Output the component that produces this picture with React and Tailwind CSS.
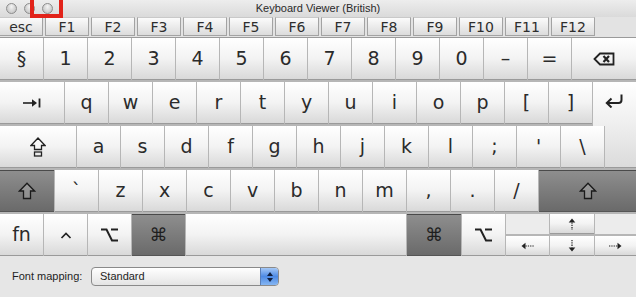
import React from "react";

const LIGHT =
  "flex items-center justify-center shrink-0 h-full bg-linear-to-b from-[#ffffff] via-[#f3f3f3] to-[#d9d9d9] border-b border-[#9a9a9a] text-[#2b2b2b]";
const DARK =
  "flex items-center justify-center shrink-0 h-full bg-linear-to-b from-[#8e8e8e] to-[#6a6a6a] border-t border-t-[#4a4a4a] border-b border-b-[#555555] text-[#1e1e1e]";
const FKEY =
  "flex items-center justify-center shrink-0 h-[19px] bg-linear-to-b from-[#fbfbfb] to-[#dcdcdc] border border-[#a3a3a3] border-t-[#c9c9c9] text-[14px] leading-none text-[#2e2e2e]";

function Key({ w, dark, children, extra = "" }) {
  return <div className={`${dark ? DARK : LIGHT} ${w} ${extra}`}>{children}</div>;
}

const S = "#222222";

function DeleteIcon() {
  return (
    <svg width="22" height="14" viewBox="0 0 22 14">
      <path d="M1.5 7 L7 1.5 H20.5 V12.5 H7 Z" fill="none" stroke={S} strokeWidth="1.8" />
      <path d="M10.5 4 L16 10 M16 4 L10.5 10" stroke={S} strokeWidth="2.2" />
    </svg>
  );
}
function TabIcon() {
  return (
    <svg width="18" height="10" viewBox="0 0 18 10">
      <path d="M0 5 H10" stroke={S} strokeWidth="1.6" />
      <path d="M9 1.2 L14 5 L9 8.8 Z" fill={S} />
      <path d="M16.5 0.5 V9.5" stroke={S} strokeWidth="1.8" />
    </svg>
  );
}
function ReturnIcon() {
  return (
    <svg width="19" height="14" viewBox="0 0 19 14">
      <path d="M16.5 0.5 V6 Q16.5 9 13.5 9 H3" fill="none" stroke={S} strokeWidth="2" />
      <path d="M6.5 4.5 L1.8 9 L6.5 13.5" fill="none" stroke={S} strokeWidth="2" />
    </svg>
  );
}
function CapsIcon() {
  return (
    <svg width="16" height="20" viewBox="0 0 16 20">
      <path d="M8 1 L15 8.5 H11.5 V12.5 H4.5 V8.5 H1 Z" fill="#ffffff" fillOpacity="0.4" stroke={S} strokeWidth="1.3" strokeLinejoin="miter" />
      <rect x="4.5" y="15" width="7" height="4" fill="none" stroke={S} strokeWidth="1.3" />
    </svg>
  );
}
function ShiftIcon() {
  return (
    <svg width="18" height="18" viewBox="0 0 18 18">
      <path d="M9 1.2 L16.5 9 H12.5 V16.5 H5.5 V9 H1.5 Z" fill="#ffffff" fillOpacity="0.18" stroke="#1a1a1a" strokeWidth="1.3" />
    </svg>
  );
}
function OptionIcon() {
  return (
    <svg width="17" height="14" viewBox="0 0 17 14">
      <path d="M0 1.5 H5.5 L11 12.5 H17 M10 1.5 H17" fill="none" stroke={S} strokeWidth="2" />
    </svg>
  );
}
function ControlIcon() {
  return (
    <svg width="12" height="8" viewBox="0 0 12 8">
      <path d="M1.5 7 L6 2.5 L10.5 7" fill="none" stroke={S} strokeWidth="1.7" />
    </svg>
  );
}
function UpIcon() {
  return (
    <svg width="8" height="12" viewBox="0 0 8 12">
      <path d="M4 0.5 L7.3 4.5 H0.7 Z" fill={S} />
      <path d="M4 4.5 V12" stroke={S} strokeWidth="1.2" strokeDasharray="1.3 1" />
    </svg>
  );
}
function DownIcon() {
  return (
    <svg width="8" height="12" viewBox="0 0 8 12">
      <path d="M4 11.5 L7.3 7.5 H0.7 Z" fill={S} />
      <path d="M4 0 V7.5" stroke={S} strokeWidth="1.2" strokeDasharray="1.3 1" />
    </svg>
  );
}
function LeftIcon() {
  return (
    <svg width="13" height="8" viewBox="0 0 13 8">
      <path d="M0.5 4 L4.5 0.7 V7.3 Z" fill={S} />
      <path d="M4.5 4 H13" stroke={S} strokeWidth="1.2" strokeDasharray="1.3 1" />
    </svg>
  );
}
function RightIcon() {
  return (
    <svg width="13" height="8" viewBox="0 0 13 8">
      <path d="M12.5 4 L8.5 0.7 V7.3 Z" fill={S} />
      <path d="M0 4 H8.5" stroke={S} strokeWidth="1.2" strokeDasharray="1.3 1" />
    </svg>
  );
}

const numRow = ["§", "1", "2", "3", "4", "5", "6", "7", "8", "9", "0", "–", "="];
const tabRow = ["q", "w", "e", "r", "t", "y", "u", "i", "o", "p", "[", "]"];
const capsRow = ["a", "s", "d", "f", "g", "h", "j", "k", "l", ";", "'", "\\"];
const shiftRow = ["`", "z", "x", "c", "v", "b", "n", "m", ",", ".", "/"];
const fKeys = ["F1", "F2", "F3", "F4", "F5", "F6", "F7", "F8", "F9", "F10", "F11", "F12"];

export default function App() {
  return (
    <div className="w-[636px] h-[297px] overflow-hidden bg-[#e6e6e6] flex flex-col font-['DejaVu_Sans',sans-serif]">
      {/* Title bar */}
      <div className="relative z-10 h-[17px] shrink-0 grid grid-cols-[1fr_auto_1fr] items-center bg-linear-to-b from-[#ededed] to-[#dadada]">
        <div className="flex items-center gap-[7px] pl-[6px]">
          <div className="w-[11px] h-[11px] rounded-full border border-[#8d8d8d] bg-radial-[at_50%_30%] from-[#f4f4f4] to-[#b9b9b9]" />
          <div className="w-[11px] h-[11px] rounded-full border border-[#8d8d8d] bg-radial-[at_50%_30%] from-[#f4f4f4] to-[#b9b9b9]" />
          <div className="w-[11px] h-[11px] rounded-full border border-[#8d8d8d] bg-radial-[at_50%_30%] from-[#f4f4f4] to-[#b9b9b9]" />
        </div>
        <div className="font-['Liberation_Sans',sans-serif] text-[11px] leading-none text-[#2a2a2a]">
          Keyboard Viewer (British)
        </div>
        <div />
        <div className="absolute z-20 left-[30px] top-0 w-[33px] h-[18px] border-x-[4px] border-b-[4px] border-solid border-[#e2231a]" />
      </div>

      {/* Function row */}
      <div className="h-[20px] shrink-0 flex items-start gap-[2px] bg-[#e3e3e3]">
        <div className={`${FKEY} w-[43px] border-l-0`}>esc</div>
        {fKeys.map((k) => (
          <div key={k} className={`${FKEY} w-[44px]`}>
            {k}
          </div>
        ))}
      </div>

      {/* Main keyboard */}
      <div className="flex flex-col gap-[2px] bg-[#b6b6b6] border-t border-[#9a9a9a] text-[19px] leading-none">
        <div className="flex gap-px h-[42px]">
          {numRow.map((k) => (
            <Key key={k} w="w-[43px]">{k}</Key>
          ))}
          <Key w="flex-1">
            <DeleteIcon />
          </Key>
        </div>

        <div className="flex gap-px h-[42px]">
          <Key w="w-[64px]">
            <TabIcon />
          </Key>
          {tabRow.map((k) => (
            <Key key={k} w="w-[43px]">{k}</Key>
          ))}
          <div className="flex-1 h-[44px] self-start flex justify-center pt-[12px] bg-linear-to-b from-[#ffffff] to-[#eeeeee] text-[#2b2b2b]">
            <ReturnIcon />
          </div>
        </div>

        <div className="flex gap-px h-[42px]">
          <Key w="w-[76px]">
            <CapsIcon />
          </Key>
          {capsRow.map((k) => (
            <Key key={k} w="w-[43px]">{k}</Key>
          ))}
          <div className="flex-1 h-full bg-linear-to-b from-[#eeeeee] to-[#dbdbdb] border-b border-[#9a9a9a]" />
        </div>

        <div className="flex gap-px h-[42px]">
          <Key w="w-[54px]" dark>
            <ShiftIcon />
          </Key>
          {shiftRow.map((k) => (
            <Key key={k} w="w-[43px]">{k}</Key>
          ))}
          <Key w="flex-1" dark>
            <ShiftIcon />
          </Key>
        </div>

        <div className="flex gap-px h-[42px]">
          <Key w="w-[43px]">fn</Key>
          <Key w="w-[43px]">
            <ControlIcon />
          </Key>
          <Key w="w-[43px]">
            <OptionIcon />
          </Key>
          <Key w="w-[53px]" dark>
            <span className="text-[18px]">⌘</span>
          </Key>
          <Key w="w-[220px]" />
          <Key w="w-[54px]" dark>
            <span className="text-[18px]">⌘</span>
          </Key>
          <Key w="w-[43px]">
            <OptionIcon />
          </Key>
          <div className="flex-1 flex flex-col gap-[2px]">
            <div className="flex gap-px h-[20px]">
              <div className="w-[43px] bg-[#ececec]" />
              <Key w="w-[44px]">
                <UpIcon />
              </Key>
              <div className="flex-1 bg-[#ececec]" />
            </div>
            <div className="flex gap-px h-[20px]">
              <Key w="w-[43px]">
                <LeftIcon />
              </Key>
              <Key w="w-[44px]">
                <DownIcon />
              </Key>
              <Key w="flex-1">
                <RightIcon />
              </Key>
            </div>
          </div>
        </div>
      </div>

      {/* Font mapping */}
      <div className="flex-1 flex items-center pl-[12px] font-['Liberation_Sans',sans-serif] text-[11px] text-[#1e1e1e]">
        <span className="w-[79px] shrink-0">Font mapping:</span>
        <div className="flex items-center h-[19px] w-[188px] rounded-[4px] border border-[#8a8a8a] bg-linear-to-b from-[#ffffff] to-[#e4e4e4] overflow-hidden">
          <span className="flex-1 pl-[8px] leading-none">Standard</span>
          <div className="w-[18px] h-full border-l border-[#5a7fb8] bg-linear-to-b from-[#a5c8f6] via-[#4d8ae4] to-[#86b6f2] flex flex-col items-center justify-center gap-[2px]">
            <svg width="6" height="4" viewBox="0 0 6 4">
              <path d="M3 0 L6 4 H0 Z" fill="#102040" />
            </svg>
            <svg width="6" height="4" viewBox="0 0 6 4">
              <path d="M3 4 L6 0 H0 Z" fill="#102040" />
            </svg>
          </div>
        </div>
      </div>
    </div>
  );
}
